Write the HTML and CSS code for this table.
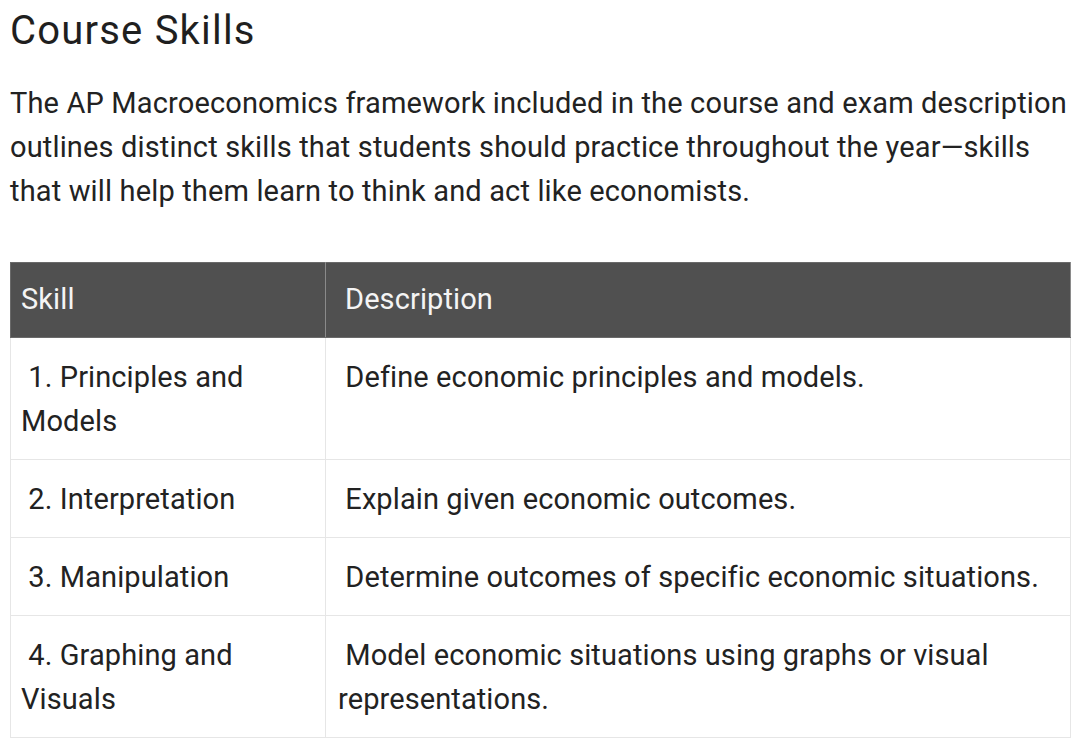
FILE: index.html
```html
<!DOCTYPE html>
<html lang="en">
<head>
<meta charset="utf-8">
<title>Course Skills</title>
<link rel="stylesheet" href="styles.css">
</head>
<body>
<main class="page">
  <h1 class="title">Course Skills</h1>
  <p class="intro">The AP Macroeconomics framework included in the course and exam description outlines distinct skills that students should practice throughout the year—skills that will help them learn to think and act like economists.</p>
  <table class="skills">
    <colgroup>
      <col class="col-skill">
      <col class="col-desc">
    </colgroup>
    <thead>
      <tr>
        <th>Skill</th>
        <th class="desc-head">Description</th>
      </tr>
    </thead>
    <tbody>
      <tr>
        <td>&nbsp;1. Principles and Models</td>
        <td>&nbsp;Define economic principles and models.</td>
      </tr>
      <tr>
        <td>&nbsp;2. Interpretation</td>
        <td>&nbsp;Explain given economic outcomes.</td>
      </tr>
      <tr>
        <td>&nbsp;3. Manipulation</td>
        <td>&nbsp;Determine outcomes of specific economic situations.</td>
      </tr>
      <tr>
        <td>&nbsp;4. Graphing and Visuals</td>
        <td>&nbsp;Model economic situations using graphs or visual representations.</td>
      </tr>
    </tbody>
  </table>
</main>
</body>
</html>
```

FILE: styles.css
```css
html, body {
  margin: 0;
  padding: 0;
  background: #ffffff;
}

body {
  font-family: Roboto, "Liberation Sans", Arial, sans-serif;
  color: #222222;
}

.page {
  padding: 0 10px;
}

.title {
  margin: 7px 0 0;
  font-size: 40px;
  line-height: 48px;
  letter-spacing: 1.2px;
  font-weight: 400;
  color: #1f1f1f;
}

.intro {
  margin: 26px -10px 0 0;
  font-size: 29px;
  line-height: 44px;
  letter-spacing: 0.15px;
  color: #222222;
}

.skills {
  margin-top: 49px;
  width: 1060px;
  border-collapse: collapse;
  table-layout: fixed;
  font-size: 29px;
  line-height: 44px;
  letter-spacing: 0.1px;
}

.col-skill {
  width: 315px;
}

.col-desc {
  width: 745px;
}

.skills th {
  background: #505050;
  color: #f4f4f4;
  font-weight: 400;
  text-align: left;
  padding: 14px 10px 16px;
  border: 1px solid #6a6a6a;
  border-right: 1px solid #8a8a8a;
}

.skills th.desc-head {
  padding-left: 19px;
}

.skills td {
  vertical-align: top;
  padding: 17px 10px 16px;
  border: 1px solid #e6e6e6;
  color: #222222;
}

.skills td + td {
  padding-left: 12px;
}
```
